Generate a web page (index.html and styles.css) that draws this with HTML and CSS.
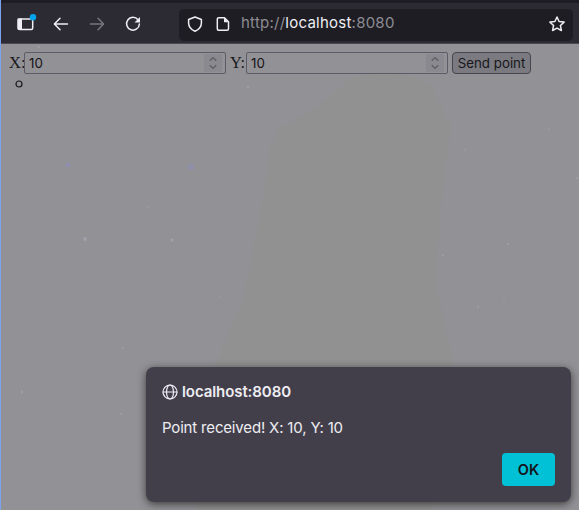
FILE: index.html
```html
<!DOCTYPE html>
<html lang="en">
<head>
<meta charset="utf-8">
<title>localhost:8080</title>
<link rel="stylesheet" href="styles.css">
</head>
<body>
<div class="window">
  <header class="toolbar">
    <svg class="icon sidebar" viewBox="0 0 22 20"><rect x="3.200" y="7" width="14.500" height="10.600" rx="1.500"/><path class="fill" d="M2.500 6.500h4.500v11.500H4a1.500 1.500 0 0 1-1.500-1.500z"/><circle cx="18" cy="5.200" r="3.200"/></svg>
    <svg class="icon back" viewBox="0 0 16 16"><path d="M14.500 8H1.500M7 2.300 1.400 8 7 13.700"/></svg>
    <svg class="icon forward" viewBox="0 0 16 16"><path d="M1.500 8h13M9 2.300 14.600 8 9 13.700"/></svg>
    <svg class="icon reload" viewBox="0 0 16 16"><path d="M13 3.700A6.400 6.400 0 1 0 14.400 8"/><path class="fill" d="M15 1v5.500H9.500z"/></svg>
    <div class="urlbar">
      <svg class="icon shield" viewBox="0 0 16 16"><path d="M8 1 14.400 3.500V7c0 3.700-2.200 6.500-6.400 8.300C3.800 13.500 1.600 10.700 1.600 7V3.500z"/></svg>
      <svg class="icon page" viewBox="0 0 16 16"><path d="M3.800 1.700h5.700l4 4v7.100a1.500 1.500 0 0 1-1.500 1.500H3.800a1.500 1.500 0 0 1-1.500-1.500V3.200a1.500 1.500 0 0 1 1.500-1.500z"/><path class="fill" d="M9 1.500v4.700h4.700z"/></svg>
      <span class="url">http://<b>localhost</b>:8080</span>
      <svg class="icon star" viewBox="0 0 16 16"><path d="m8 1 2.100 4.500 5 .6-3.700 3.400 1 5L8 12.100l-4.400 2.400 1-5L.9 6.100l5-.6z"/></svg>
    </div>
  </header>
  <main class="page-body">
    <svg class="backdrop" viewBox="0 0 579 466">
      <path class="shade" d="M284 82 315 64 350 35Q390 20 430 40L451 83 441 160 436 240 453 318 432 466H196L212 326 243 257 261 165 270 105 279 84z"/>
      <g class="stars">
        <circle cx="85" cy="195" r="2"/><circle cx="172" cy="196" r="1.700"/><circle cx="39" cy="3" r="1"/><circle cx="248" cy="43" r="1.200"/><circle cx="148" cy="163" r=".8"/><circle cx="123" cy="304" r="1"/><circle cx="22" cy="348" r="1.200"/><circle cx="443" cy="211" r="1"/><circle cx="508" cy="200" r="1"/><circle cx="478" cy="263" r="1"/><circle cx="504" cy="258" r=".8"/><circle cx="549" cy="85" r=".8"/><circle cx="465" cy="106" r=".8"/><circle cx="577" cy="134" r="1"/><circle cx="121" cy="370" r="1"/><circle cx="220" cy="253" r=".7"/>
      </g>
      <g class="blue"><circle cx="68" cy="121" r="2.500"/><circle cx="191" cy="123" r="3"/></g>
    </svg>
    <form class="point-form">
      <label for="x">X:</label><span class="number"><input id="x" value="10"><svg class="spin" viewBox="0 0 18 18"><path d="m5.700 6.700 3.300-3 3.300 3M5.700 11.300l3.300 3 3.300-3"/></svg></span>
      <label class="second" for="y">Y:</label><span class="number"><input id="y" value="10"><svg class="spin" viewBox="0 0 18 18"><path d="m5.700 6.700 3.300-3 3.300 3M5.700 11.300l3.300 3 3.300-3"/></svg></span>
      <button class="send" type="button">Send point</button>
    </form>
    <svg class="plot" viewBox="0 0 24 20"><circle cx="10" cy="10" r="3"/></svg>
  </main>
  <section class="dialog" role="dialog">
    <div class="origin"><svg class="icon globe" viewBox="0 0 16 16"><circle cx="8" cy="8" r="7"/><ellipse cx="8" cy="8" rx="3.500" ry="7"/><path d="M1 8h14"/></svg>localhost:8080</div>
    <p class="message">Point received! X: 10, Y: 10</p>
    <button class="ok" type="button">OK</button>
  </section>
</div>
</body>
</html>
```

FILE: styles.css
```css
* { box-sizing: border-box; }
body { margin: 0; overflow: hidden; }
.window { position: relative; width: 579px; height: 510px; display: flex; flex-direction: column; border-left: 1px solid #7da2ee; background: #929195; }
.toolbar { height: 44px; flex: none; display: flex; align-items: center; padding: 3px 6px 0 14px; background: #2c2a33; border-top: 3px solid #1e1d24; border-bottom: 1px solid #4b4a52; }
.icon { width: 16px; height: 16px; flex: none; fill: none; stroke: #efeef4; stroke-width: 1.5; stroke-linecap: round; stroke-linejoin: round; }
.icon .fill { fill: #efeef4; stroke: none; }
.sidebar { width: 22px; height: 20px; margin-top: -5px; }
.sidebar circle { fill: #00a4e8; stroke: none; }
.back { margin-left: 16px; }
.forward { margin-left: 20px; stroke: #77757d; }
.reload { margin-left: 20px; }
.back, .forward, .reload, .shield, .page, .star { margin-top: -2px; }
.urlbar { width: 394px; height: 32px; margin-left: 38px; display: flex; align-items: center; padding: 0 8px; background: #1e1d24; border-radius: 5px; }
.page { margin-left: 12px; }
.url { margin: -3px 0 0 10px; flex: 1; font: 15px/20px Inter, sans-serif; letter-spacing: .24px; color: #8d8c93; }
.url b { font-weight: 400; color: #efeef4; }
.page-body { position: relative; flex: 1; padding: 8px; font: 16.5px/22px "Liberation Serif", serif; color: #19191c; }
.backdrop { position: absolute; left: -1px; top: 0; width: 579px; height: 466px; }
.shade { fill: #919192; }
.stars { fill: #a09fab; }
.blue { fill: #8f8fac; }
.point-form { position: relative; display: flex; height: 22px; }
.point-form label { width: 15px; flex: none; white-space: nowrap; }
.point-form .second { width: 16px; margin-left: 4px; }
.number { width: 202px; flex: none; display: flex; align-items: center; border: 1px solid #5d5b67; border-radius: 2px; padding: 0 3px; }
.number input { flex: 1; min-width: 0; padding: 0 1px; border: 0; background: none; outline: 0; font: 13.333px/18px Inter, sans-serif; color: #161519; }
.spin { width: 18px; height: 18px; background: #8a898f; fill: none; stroke: #606069; stroke-width: 1.4; }
.send { width: 79px; height: 22px; flex: none; margin-left: 4px; padding: 0; border: 1px solid #474650; border-radius: 4px; background: #7b7a80; font: 13.333px/18px Inter, sans-serif; color: #18171c; }
.plot { position: relative; display: block; width: 24px; height: 20px; fill: none; stroke: #19191c; stroke-width: 1.2; }
.dialog { position: absolute; left: 145px; top: 367px; width: 425px; height: 135px; display: flex; flex-direction: column; padding: 16px; border-radius: 8px; background: #423f4b; box-shadow: 0 2px 8px #0009; font: 15px/18px Inter, sans-serif; color: #eeedf2; }
.origin { display: flex; align-items: center; gap: 4px; font-weight: 600; letter-spacing: -.08px; }
.globe { stroke-width: 1.2; }
.message { margin: 18px 0 0; letter-spacing: -.17px; }
.ok { width: 53px; height: 33px; margin-top: auto; align-self: flex-end; border: 0; border-radius: 4px; background: #00c1d5; font: 600 14.5px/20px Inter, sans-serif; color: #15141a; }
```
